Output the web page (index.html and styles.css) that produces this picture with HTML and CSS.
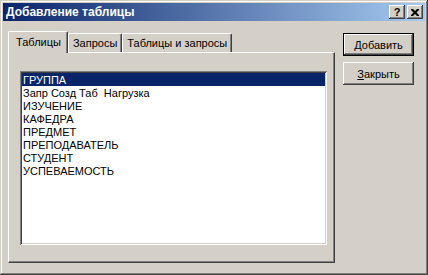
FILE: index.html
```html
<!DOCTYPE html>
<html lang="ru">
<head>
  <meta charset="UTF-8" />
  <title>Добавление таблицы</title>
  <link rel="stylesheet" href="styles.css">
</head>
<body>
  <div class="window">
    <div class="titlebar">
      <span class="title">Добавление таблицы</span>
      <div class="caption-buttons">
        <button class="cap-btn help">?</button>
        <button class="cap-btn close">
          <svg width="8" height="7" viewBox="0 0 8 7">
            <path d="M0 0h2l2 2 2-2h2v1l-2.5 2.5 2.5 2.5v1h-2l-2-2-2 2h-2v-1l2.5-2.5-2.5-2.5z" fill="#000"/>
          </svg>
        </button>
      </div>
    </div>

    <div class="content">
      <div class="tabbox">
        <div class="tabs">
          <div class="tab active">Таблицы</div>
          <div class="tab">Запросы</div>
          <div class="tab">Таблицы и запросы</div>
        </div>
        <div class="panel">
          <ul class="listbox">
            <li class="selected">ГРУППА</li>
            <li>Запр Созд Таб&nbsp; Нагрузка</li>
            <li>ИЗУЧЕНИЕ</li>
            <li>КАФЕДРА</li>
            <li>ПРЕДМЕТ</li>
            <li>ПРЕПОДАВАТЕЛЬ</li>
            <li>СТУДЕНТ</li>
            <li>УСПЕВАЕМОСТЬ</li>
          </ul>
        </div>
      </div>

      <div class="actions">
        <button class="btn default"><u>Д</u>обавить</button>
        <button class="btn"><u>З</u>акрыть</button>
      </div>
    </div>
  </div>
</body>
</html>
```

FILE: styles.css
```css
body {
  margin: 0;
  background: #d4d0c8;
  font-family: "Liberation Sans", Arial, sans-serif;
  font-size: 11px;
  color: #000;
}

.window {
  box-sizing: border-box;
  width: 428px;
  height: 275px;
  padding: 3px;
  background: #d4d0c8;
  box-shadow: inset -1px -1px #404040, inset 1px 1px #d4d0c8,
              inset -2px -2px #808080, inset 2px 2px #fff;
}

/* title bar */
.titlebar {
  height: 18px;
  display: flex;
  align-items: center;
  justify-content: space-between;
  padding: 0 2px 0 2px;
  background: linear-gradient(to right, #0a246a, #a6caf0);
}

.title {
  color: #fff;
  font-weight: bold;
  font-size: 12px;
  padding-left: 1px;
}

.caption-buttons {
  display: flex;
  gap: 2px;
}

.cap-btn {
  width: 16px;
  height: 14px;
  padding: 0;
  border: none;
  background: #d4d0c8;
  display: flex;
  align-items: center;
  justify-content: center;
  font-family: "Liberation Sans", Arial, sans-serif;
  font-weight: bold;
  font-size: 11px;
  box-shadow: inset -1px -1px #404040, inset 1px 1px #fff,
              inset -2px -2px #808080, inset 2px 2px #d4d0c8;
}

.cap-btn svg { display: block; margin-top: 1px; }

/* main area */
.content {
  display: flex;
  align-items: flex-start;
  padding: 10px 0 0 5px;
}

.tabbox {
  width: 327px;
}

.tabs {
  display: flex;
  align-items: flex-end;
  height: 21px;
}

.tab {
  box-sizing: border-box;
  height: 19px;
  padding: 3px 4px 0 4px;
  border-top: 1px solid #fff;
  border-left: 1px solid #fff;
  border-right: 1px solid #404040;
  box-shadow: inset -1px 0 #808080;
  border-radius: 2px 2px 0 0;
  white-space: nowrap;
}

.tab.active {
  height: 22px;
  margin-bottom: -1px;
  padding: 4px 6px 0 7px;
  background: #d4d0c8;
  position: relative;
  z-index: 1;
}

.panel {
  box-sizing: border-box;
  height: 211px;
  padding: 18px 0 0 11px;
  border-top: 1px solid #fff;
  border-left: 1px solid #fff;
  border-right: 1px solid #404040;
  border-bottom: 1px solid #404040;
  box-shadow: inset -1px -1px #808080;
}

.listbox {
  box-sizing: border-box;
  width: 307px;
  height: 174px;
  margin: 0;
  padding: 2px;
  list-style: none;
  background: #fff;
  box-shadow: inset 1px 1px #808080, inset -1px -1px #fff,
              inset 2px 2px #404040, inset -2px -2px #d4d0c8;
}

.listbox li {
  height: 12px;
  padding: 1px 0 0 1px;
  line-height: 13px;
  white-space: pre;
}

.listbox li.selected {
  background: #0a246a;
  color: #fff;
}

/* side buttons */
.actions {
  display: flex;
  flex-direction: column;
  gap: 6px;
  margin: 2px 0 0 8px;
}

.btn {
  width: 71px;
  height: 23px;
  padding: 0;
  border: none;
  background: #d4d0c8;
  font-family: "Liberation Sans", Arial, sans-serif;
  font-size: 11px;
  color: #000;
  box-shadow: inset -1px -1px #404040, inset 1px 1px #fff,
              inset -2px -2px #808080;
}

.btn.default {
  border: 1px solid #000;
}

.btn u { text-decoration: underline; }
```
